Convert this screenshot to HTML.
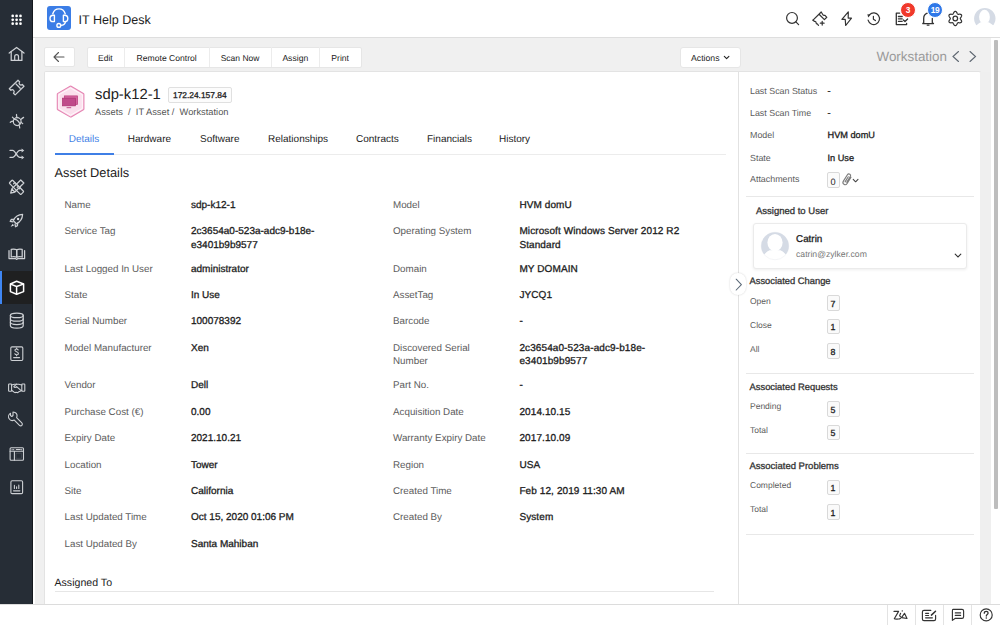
<!DOCTYPE html>
<html><head><meta charset="utf-8"><title>IT Help Desk</title>
<style>
html,body{margin:0;padding:0;width:1000px;height:625px;overflow:hidden;background:#f0f0f0}
body{position:relative;font-family:"Liberation Sans", sans-serif}
.t{position:absolute;white-space:nowrap;line-height:1;font-family:"Liberation Sans", sans-serif;text-rendering:geometricPrecision}
svg{overflow:visible}
</style></head><body>
<div style="position:absolute;left:0;top:0;width:1000px;height:625px;background:#f0f0f0"></div><div style="position:absolute;left:0px;top:0px;width:33px;height:605px;background:#262d36"></div><div style="position:absolute;left:32px;top:0px;width:1px;height:605px;background:#14181d"></div><div style="position:absolute;left:0px;top:271px;width:32px;height:33px;background:#1f2021"></div><div style="position:absolute;left:0px;top:271px;width:2px;height:33px;background:#3f86f2"></div><svg style="position:absolute;left:0;top:0" width="33" height="605" viewBox="0 0 33 605"><circle cx="12.7" cy="15.9" r="1.35" fill="#fff"/><circle cx="12.7" cy="19.8" r="1.35" fill="#fff"/><circle cx="12.7" cy="23.7" r="1.35" fill="#fff"/><circle cx="16.599999999999998" cy="15.9" r="1.35" fill="#fff"/><circle cx="16.599999999999998" cy="19.8" r="1.35" fill="#fff"/><circle cx="16.599999999999998" cy="23.7" r="1.35" fill="#fff"/><circle cx="20.5" cy="15.9" r="1.35" fill="#fff"/><circle cx="20.5" cy="19.8" r="1.35" fill="#fff"/><circle cx="20.5" cy="23.7" r="1.35" fill="#fff"/><g transform="translate(4,42)" fill="none" stroke="#cdd0d4" stroke-width="1.25" stroke-linecap="round" stroke-linejoin="round"><path d="M5.2 11 L12.6 5.4 L20 11"/><path d="M7.2 9.6 V18.4 H17.9 V9.6"/><path d="M10.7 18.4 V14.4 A1.9 1.9 0 0 1 14.5 14.4 V18.4"/></g><g transform="translate(4,75)" fill="none" stroke="#cdd0d4" stroke-width="1.25" stroke-linecap="round" stroke-linejoin="round"><path d="M14 5.2 L15.7 6.9 A1.5 1.5 0 0 0 18.3 9.5 L20 11.2 L11.2 19.9 L9.5 18.2 A1.5 1.5 0 0 0 6.9 15.3 L5.3 13.7 Z"/><path d="M12 9 L16.2 13.3"/></g><g transform="translate(0,0)" fill="none" stroke="#cdd0d4" stroke-width="1.25" stroke-linecap="round" stroke-linejoin="round"><circle cx="17.2" cy="121.6" r="3.9"/><path d="M14.4 119.3 C16.4 119.4 18.6 121 19.7 123.4"/><path d="M16.5 114.5 C16.4 115.6 16.7 116.6 17 117.6 M12.4 117.2 C13.1 118 13.8 118.6 14.4 119 M10.3 122.3 C11.3 121.5 12.3 121.2 13.4 121.2 M19.7 127.9 C19.7 126.9 19.4 126 19 125.3 M23.6 117.4 C22.6 118 21.8 118.6 21 119.4 M22.7 123.6 C22.1 123 21.6 122.7 21 122.5"/></g><g transform="translate(4,142)" fill="none" stroke="#cdd0d4" stroke-width="1.25" stroke-linecap="round" stroke-linejoin="round"><path d="M6 8.4 H8.6 C11.6 8.4 12.8 15.4 15.8 15.4 H18.2"/><path d="M6 15.4 H8.6 C11.6 15.4 12.8 8.4 15.8 8.4 H18.2"/></g><g transform="translate(4,142)" fill="#c5c9ce"><path d="M17.6 6.4 L20.3 8.4 L17.6 10.4 Z M17.6 13.4 L20.3 15.4 L17.6 17.4 Z"/></g><g transform="translate(4,175)" fill="none" stroke="#cdd0d4" stroke-width="1.25" stroke-linecap="round" stroke-linejoin="round"><g transform="rotate(45 12.5 12.3)"><rect x="4.3" y="10.1" width="16.4" height="4.4" rx="0.8"/><path d="M8 10.1 V11.8 M10.5 10.1 V11.3 M13 10.1 V11.8 M15.5 10.1 V11.3"/></g><g transform="rotate(-45 12.5 12.3)"><path d="M20.7 10.1 V14.5 H8 L4.3 12.3 L8 10.1 Z M8 10.1 V14.5"/></g></g><g transform="translate(4,208)" fill="none" stroke="#cdd0d4" stroke-width="1.25" stroke-linecap="round" stroke-linejoin="round"><path d="M18.6 6.4 C14 6.6 11 9 9.2 12.5 L12.4 15.8 C16 14 18.4 11 18.6 6.4 Z"/><path d="M9.9 11.3 L7.4 11.4 L6.2 13.4 L9 13.9 M13.6 15.1 L13.5 17.6 L11.5 18.8 L11 16"/></g><g transform="translate(4,208)" fill="#dfe2e6"><circle cx="14.1" cy="11" r="1.2"/><path d="M8.8 15.8 L6.6 18.8 L10 17.5 Z"/></g><g transform="translate(4,241)" fill="none" stroke="#cdd0d4" stroke-width="1.25" stroke-linecap="round" stroke-linejoin="round"><path d="M5 9.6 V17.6 H11.6 L12.7 18.4 L13.8 17.6 H20.6 V9.6"/><path d="M7.2 8.4 C9 8 11 8 12.7 8.8 V16.2 C11 15.6 9 15.6 7.2 16 Z"/><path d="M18.2 8.4 C16.4 8 14.4 8 12.7 8.8 V16.2 C14.4 15.6 16.4 15.6 18.2 16 Z"/></g><g transform="translate(4,275)" fill="none" stroke="#ffffff" stroke-width="1.5" stroke-linecap="round" stroke-linejoin="round"><path d="M12.6 6.3 L19.6 9 V16.6 L12.6 19.2 L6.4 16.6 V9 Z"/><path d="M6.6 9.1 L12.6 11.5 L19.4 9.1 M12.6 11.5 V19"/></g><g transform="translate(4,308)" fill="none" stroke="#cdd0d4" stroke-width="1.25" stroke-linecap="round" stroke-linejoin="round"><path d="M6.4 7.4 A6.4 2.2 0 0 1 19.2 7.4 V17.8 A6.4 2.4 0 0 1 6.4 17.8 Z"/><path d="M6.4 7.4 A6.4 2.2 0 0 0 19.2 7.4 M6.4 10.9 A6.4 2.2 0 0 0 19.2 10.9 M6.4 14.3 A6.4 2.2 0 0 0 19.2 14.3"/></g><g transform="translate(4,341)" fill="none" stroke="#cdd0d4" stroke-width="1.1" stroke-linecap="round" stroke-linejoin="round"><rect x="6.8" y="5.9" width="12" height="13.6" rx="1.2"/><path d="M9.7 16.6 H15.5"/><path d="M14.2 9 C13.9 8.4 13.3 8 12.5 8 C11.5 8 10.9 8.6 10.9 9.3 C10.9 11 14.4 10.5 14.4 12.4 C14.4 13.2 13.6 13.8 12.6 13.8 C11.7 13.8 11 13.4 10.8 12.7 M12.6 7 V8 M12.6 13.8 V14.7"/></g><g transform="translate(4,375)" fill="none" stroke="#cdd0d4" stroke-width="1.1" stroke-linecap="round" stroke-linejoin="round"><rect x="4.6" y="9" width="3" height="7.3" rx="0.6"/><rect x="17.8" y="9" width="3" height="7.3" rx="0.6"/><path d="M7.6 10 L10.4 9.2 H12.6 L14.8 9.2 L17.8 10"/><path d="M12.6 9.2 L9.8 11.6 C10.4 12.6 11.6 12.6 12.6 11.6 L16.6 15.2"/><path d="M7.6 15.2 L10.4 17.4 C11 17.8 11.6 17.6 12 17.2 L13 17.6 C13.6 17.8 14.2 17.4 14.4 17 L17.8 15.6"/></g><g transform="translate(4,408)" fill="none" stroke="#cdd0d4" stroke-width="1.1" stroke-linecap="round" stroke-linejoin="round"><path d="M6.5 5.2 C4.6 6.3 4 8.7 5 10.5 C6.1 12.4 8.4 13 10.3 12.1 L15.5 17.3 C16.2 18 17.3 18 17.9 17.3 C18.5 16.6 18.5 15.6 17.8 14.9 L12.6 9.7 C13.4 7.9 12.9 5.7 11 4.6 C10.3 4.2 9.6 4 9 4 V7.5 L7.8 8.5 L6.5 7.6 Z"/></g><g transform="translate(4,441)" fill="none" stroke="#cdd0d4" stroke-width="1.1" stroke-linecap="round" stroke-linejoin="round"><rect x="6.1" y="6.7" width="13.4" height="12.6" rx="1"/><path d="M6.1 10.3 H19.5 M10.4 10.3 V19.3"/><path d="M12.3 8.5 H16.3"/><path d="M12.4 12.3 H17.4 V17.3 H12.4 Z" stroke-width="0.5" opacity="0.3"/></g><g transform="translate(4,441)" fill="#c5c9ce"><rect x="7.6" y="7.9" width="1" height="1.4"/><rect x="9.2" y="7.9" width="1" height="1.4"/><rect x="17.2" y="7.9" width="1" height="1.4"/></g><g transform="translate(4,475)" fill="none" stroke="#cdd0d4" stroke-width="1.1" stroke-linecap="round" stroke-linejoin="round"><rect x="6.9" y="5.7" width="11.7" height="12.9" rx="1.2"/><path d="M9.6 15.8 H15.8" stroke-width="1.3"/><path d="M10.4 13.5 V10.4 M12.6 13.5 V11.8 M14.8 13.5 V10"/></g></svg><div style="position:absolute;left:33px;top:38px;width:1.6px;height:567px;background:#fff"></div><div style="position:absolute;left:33px;top:0px;width:967px;height:37px;background:#fff"></div><div style="position:absolute;left:33px;top:37px;width:967px;height:1px;background:#dedede"></div><div style="position:absolute;left:47.4px;top:6.2px;width:24px;height:24px;background:#3b7de6;border-radius:3px"></div><svg style="position:absolute;left:47.4px;top:6.2px;" width="24" height="24" viewBox="0 0 24 24"><g fill="none" stroke="#fff" stroke-width="1.4" stroke-linecap="round" stroke-linejoin="round"><path d="M5.8 7.8 C6.8 4.6 9.2 2.9 12 2.9 C14.8 2.9 17.2 4.6 18.2 7.8"/><path d="M7.4 9.2 H6.2 C4.2 9.2 3 10.7 3 12.4 C3 14.1 4.2 15.6 6.2 15.6 H7.4 Z"/><path d="M16.4 9.2 H17.6 C19.6 9.2 20.8 10.7 20.8 12.4 C20.8 14.1 19.6 15.6 17.6 15.6 H16.4 Z"/><path d="M18.4 15.8 C18 18 16 19.3 13.8 19.4"/><circle cx="11.8" cy="19.4" r="1.9"/></g></svg><div class="t" style="left:78.5px;top:14.00px;font-size:12.55px;color:#1e1e1e;">IT Help Desk</div><svg style="position:absolute;left:782px;top:6px;" width="26" height="26" viewBox="0 0 26 26"><g fill="none" stroke="#333" stroke-width="1.2" stroke-linecap="round" stroke-linejoin="round"><circle cx="10" cy="11.9" r="5.4"/><path d="M13.9 15.8 L16.6 18.6"/></g></svg><svg style="position:absolute;left:808px;top:6px;" width="26" height="26" viewBox="0 0 26 26"><g fill="none" stroke="#333" stroke-width="1.2" stroke-linecap="round" stroke-linejoin="round"><path d="M5 14.2 L13.2 6 L14.6 8.2 C15.1 9.2 16.1 9.5 17 9.3 L18.8 11.3 L16.4 13.6 L11.3 8.5"/><path d="M5 14.2 L6.6 15.5 C7.4 15.3 8.2 15.8 8.1 16.6 C8 17.4 8.6 17.9 9.3 17.9 L10.5 19.4"/><path d="M14.2 15.3 V19.1 M12.3 17.2 H16.1"/></g></svg><svg style="position:absolute;left:835px;top:6px;" width="26" height="26" viewBox="0 0 26 26"><g fill="none" stroke="#333" stroke-width="1.2" stroke-linecap="round" stroke-linejoin="round"><path d="M13.3 5.9 L6.9 13.3 H10.2 L10.7 19.5 L16.5 12.1 H13.2 Z"/></g></svg><svg style="position:absolute;left:862px;top:6px;" width="26" height="26" viewBox="0 0 26 26"><g fill="none" stroke="#333" stroke-width="1.2" stroke-linecap="round" stroke-linejoin="round"><path d="M6.1 14.2 A5.8 5.8 0 1 0 7.6 8.6"/><path d="M11.4 10.3 V13.2 L13.4 14.6"/></g></svg><svg style="position:absolute;left:862px;top:6px;" width="26" height="26" viewBox="0 0 26 26"><path d="M5.4 8.2 L8.8 8.6 L6.2 11.4 Z" fill="#333"/></svg><svg style="position:absolute;left:890px;top:2px;" width="26" height="26" viewBox="0 0 26 26"><g fill="none" stroke="#333" stroke-width="1.3" stroke-linecap="round" stroke-linejoin="round"><path d="M9.6 11.2 H6.3 V22.6 H16.6 V21.4"/><path d="M8.4 14.5 H12.2 M8.4 16.8 H12.2 M8.4 19.3 H12.2"/><path d="M13.3 18 L15 19.5 L17.6 17"/></g></svg><svg style="position:absolute;left:918px;top:2px;" width="26" height="26" viewBox="0 0 26 26"><g fill="none" stroke="#333" stroke-width="1.3" stroke-linecap="round" stroke-linejoin="round"><path d="M9.2 11.2 C7 12 5.7 13.8 5.7 16.5 V20.8 L4.8 21.6 H15.5 L14.3 20.8 V16.5"/><path d="M9.2 23.1 H11"/></g></svg><svg style="position:absolute;left:943px;top:6px;" width="26" height="26" viewBox="0 0 26 26"><g fill="none" stroke="#333" stroke-width="1.25" stroke-linecap="round" stroke-linejoin="round"><path d="M17.30 12.50 L17.31 12.63 L17.34 12.76 L17.40 12.90 L17.47 13.04 L17.56 13.19 L17.67 13.35 L17.78 13.52 L17.90 13.69 L18.02 13.87 L18.14 14.07 L18.26 14.26 L18.36 14.47 L18.45 14.68 L18.52 14.89 L18.58 15.10 L18.60 15.31 L18.61 15.51 L18.58 15.70 L18.53 15.88 L18.45 16.05 L18.34 16.20 L18.21 16.34 L18.06 16.46 L17.88 16.56 L17.69 16.63 L17.48 16.70 L17.26 16.74 L17.04 16.77 L16.81 16.78 L16.58 16.78 L16.35 16.77 L16.13 16.75 L15.92 16.74 L15.72 16.72 L15.53 16.71 L15.36 16.71 L15.20 16.71 L15.05 16.74 L14.92 16.77 L14.80 16.83 L14.69 16.91 L14.59 17.00 L14.50 17.12 L14.42 17.25 L14.33 17.40 L14.25 17.57 L14.16 17.75 L14.07 17.95 L13.97 18.14 L13.87 18.34 L13.75 18.54 L13.63 18.74 L13.49 18.92 L13.34 19.09 L13.19 19.23 L13.02 19.36 L12.85 19.46 L12.67 19.54 L12.49 19.58 L12.30 19.60 L12.11 19.58 L11.93 19.54 L11.75 19.46 L11.58 19.36 L11.41 19.23 L11.26 19.09 L11.11 18.92 L10.97 18.74 L10.85 18.54 L10.73 18.34 L10.63 18.14 L10.53 17.95 L10.44 17.75 L10.35 17.57 L10.27 17.40 L10.18 17.25 L10.10 17.12 L10.01 17.00 L9.91 16.91 L9.80 16.83 L9.68 16.77 L9.55 16.74 L9.40 16.71 L9.24 16.71 L9.07 16.71 L8.88 16.72 L8.68 16.74 L8.47 16.75 L8.25 16.77 L8.02 16.78 L7.79 16.78 L7.56 16.77 L7.34 16.74 L7.12 16.70 L6.91 16.63 L6.72 16.56 L6.54 16.46 L6.39 16.34 L6.26 16.20 L6.15 16.05 L6.07 15.88 L6.02 15.70 L5.99 15.51 L6.00 15.31 L6.02 15.10 L6.08 14.89 L6.15 14.68 L6.24 14.47 L6.34 14.26 L6.46 14.07 L6.58 13.87 L6.70 13.69 L6.82 13.52 L6.93 13.35 L7.04 13.19 L7.13 13.04 L7.20 12.90 L7.26 12.76 L7.29 12.63 L7.30 12.50 L7.29 12.37 L7.26 12.24 L7.20 12.10 L7.13 11.96 L7.04 11.81 L6.93 11.65 L6.82 11.48 L6.70 11.31 L6.58 11.13 L6.46 10.93 L6.34 10.74 L6.24 10.53 L6.15 10.32 L6.08 10.11 L6.02 9.90 L6.00 9.69 L5.99 9.49 L6.02 9.30 L6.07 9.12 L6.15 8.95 L6.26 8.80 L6.39 8.66 L6.54 8.54 L6.72 8.44 L6.91 8.37 L7.12 8.30 L7.34 8.26 L7.56 8.23 L7.79 8.22 L8.02 8.22 L8.25 8.23 L8.47 8.25 L8.68 8.26 L8.88 8.28 L9.07 8.29 L9.24 8.29 L9.40 8.29 L9.55 8.26 L9.68 8.23 L9.80 8.17 L9.91 8.09 L10.01 8.00 L10.10 7.88 L10.18 7.75 L10.27 7.60 L10.35 7.43 L10.44 7.25 L10.53 7.05 L10.63 6.86 L10.73 6.66 L10.85 6.46 L10.97 6.26 L11.11 6.08 L11.26 5.91 L11.41 5.77 L11.58 5.64 L11.75 5.54 L11.93 5.46 L12.11 5.42 L12.30 5.40 L12.49 5.42 L12.67 5.46 L12.85 5.54 L13.02 5.64 L13.19 5.77 L13.34 5.91 L13.49 6.08 L13.63 6.26 L13.75 6.46 L13.87 6.66 L13.97 6.86 L14.07 7.05 L14.16 7.25 L14.25 7.43 L14.33 7.60 L14.42 7.75 L14.50 7.88 L14.59 8.00 L14.69 8.09 L14.80 8.17 L14.92 8.23 L15.05 8.26 L15.20 8.29 L15.36 8.29 L15.53 8.29 L15.72 8.28 L15.92 8.26 L16.13 8.25 L16.35 8.23 L16.58 8.22 L16.81 8.22 L17.04 8.23 L17.26 8.26 L17.48 8.30 L17.69 8.37 L17.88 8.44 L18.06 8.54 L18.21 8.66 L18.34 8.80 L18.45 8.95 L18.53 9.12 L18.58 9.30 L18.61 9.49 L18.60 9.69 L18.58 9.90 L18.52 10.11 L18.45 10.32 L18.36 10.53 L18.26 10.74 L18.14 10.93 L18.02 11.13 L17.90 11.31 L17.78 11.48 L17.67 11.65 L17.56 11.81 L17.47 11.96 L17.40 12.10 L17.34 12.24 L17.31 12.37 L17.30 12.50Z"/><circle cx="12.3" cy="12.5" r="2.3"/></g></svg><svg style="position:absolute;left:970px;top:4px;" width="30" height="30" viewBox="0 0 30 30"><circle cx="14.8" cy="14.6" r="10.7" fill="#d5dbe5"/><ellipse cx="14.5" cy="12.9" rx="5.4" ry="7.1" fill="#fff"/><path d="M2 23.5 L6.5 21.3 C8 19.9 9.4 18.9 10.6 18.3 H18.6 C19.8 18.9 21.4 19.9 23 21.3 L27.5 23.5 V30 H2 Z" fill="#fff"/></svg><div style="position:absolute;left:901.2px;top:3.3px;width:14px;height:14px;border-radius:50%;background:#f0392b;border:1px solid #fff;box-sizing:content-box;margin:-1px 0 0 -1px;color:#fff;font:bold 8.4px/14px 'Liberation Sans';text-align:center">3</div><div style="position:absolute;left:928.1px;top:3.1px;width:14px;height:14px;border-radius:50%;background:#2f78e8;border:1px solid #fff;box-sizing:content-box;margin:-1px 0 0 -1px;color:#fff;font:bold 8.4px/14px 'Liberation Sans';text-align:center;letter-spacing:-0.3px">19</div><div style="position:absolute;left:44px;top:47px;width:31px;height:20px;background:#fff;border:1px solid #e6e6e6;box-sizing:border-box;border-radius:2px"></div><svg style="position:absolute;left:51px;top:49px;" width="16" height="16" viewBox="0 0 16 16"><g fill="none" stroke="#555" stroke-width="1.1" stroke-linecap="round" stroke-linejoin="round"><path d="M13 8 H3 M7.5 3.5 L3 8 L7.5 12.5"/></g></svg><div style="position:absolute;left:86.5px;top:46.5px;width:275px;height:21px;background:#fff;border:1px solid #e6e6e6;box-sizing:border-box;border-radius:2px"></div><div style="position:absolute;left:124px;top:47px;width:1px;height:20px;background:#ececec"></div><div style="position:absolute;left:209px;top:47px;width:1px;height:20px;background:#ececec"></div><div style="position:absolute;left:271px;top:47px;width:1px;height:20px;background:#ececec"></div><div style="position:absolute;left:319px;top:47px;width:1px;height:20px;background:#ececec"></div><div class="t" style="left:98px;top:54.00px;font-size:8.5px;color:#222;">Edit</div><div class="t" style="left:136.6px;top:54.00px;font-size:8.6px;color:#222;">Remote Control</div><div class="t" style="left:220.7px;top:54.00px;font-size:8.5px;color:#222;">Scan Now</div><div class="t" style="left:282.4px;top:54.00px;font-size:8.6px;color:#222;">Assign</div><div class="t" style="left:331.3px;top:54.00px;font-size:8.6px;color:#222;">Print</div><div style="position:absolute;left:679.5px;top:46.5px;width:61px;height:21px;background:#fff;border:1px solid #e6e6e6;box-sizing:border-box;border-radius:3px"></div><div class="t" style="left:691px;top:54.00px;font-size:8.7px;color:#222;">Actions</div><svg style="position:absolute;left:722.5px;top:54.5px;" width="8" height="6" viewBox="0 0 8 6"><path d="M1.3 1.3 L3.6 3.6 L5.9 1.3" fill="none" stroke="#222" stroke-width="1.1" stroke-linecap="round" stroke-linejoin="round"/></svg><div class="t" style="left:876.5px;top:50.00px;font-size:13.4px;color:#9a9a9a;">Workstation</div><svg style="position:absolute;left:950px;top:50px;" width="12" height="13" viewBox="0 0 12 13"><path d="M8.5 1.5 L3 6.5 L8.5 11.5" fill="none" stroke="#5d6670" stroke-width="1.1" stroke-linecap="round"/></svg><svg style="position:absolute;left:967px;top:50px;" width="12" height="13" viewBox="0 0 12 13"><path d="M3 1.5 L8.5 6.5 L3 11.5" fill="none" stroke="#5d6670" stroke-width="1.1" stroke-linecap="round"/></svg><div style="position:absolute;left:991px;top:38px;width:9px;height:567px;background:#fff"></div><div style="position:absolute;left:994px;top:40px;width:4px;height:469px;background:#bdbdbd;border-radius:1px"></div><div style="position:absolute;left:44px;top:71px;width:937px;height:534px;background:#fff;border:1px solid #e3e3e3;border-bottom:none;box-sizing:border-box;border-radius:2px 2px 0 0"></div><div style="position:absolute;left:980px;top:72px;width:11px;height:533px;background:#efefef"></div><div style="position:absolute;left:738px;top:72px;width:1px;height:533px;background:#e2e2e2"></div><svg style="position:absolute;left:53.8px;top:85px;" width="32" height="34" viewBox="0 0 32 34"><path d="M16.1 1.3 Q16.6 1 17.1 1.3 L29.4 8.4 Q29.9 8.7 29.9 9.3 V23.9 Q29.9 24.5 29.4 24.8 L17.1 31.9 Q16.6 32.2 16.1 31.9 L3.8 24.8 Q3.3 24.5 3.3 23.9 V9.3 Q3.3 8.7 3.8 8.4 Z" fill="#fbe0ed" stroke="#e585b3" stroke-width="1.1"/><path d="M16.6 3 L28.3 9.7 V23.5 L16.6 30.2 L4.9 23.5 V9.7 Z" fill="none" stroke="#fff" stroke-width="0.9" opacity="0.85"/><rect x="10.3" y="10.9" width="13.3" height="8.5" fill="#d566a0" stroke="#b8397a" stroke-width="0.7"/><rect x="8.3" y="13.1" width="13.3" height="7.8" fill="#c04a8a" stroke="#a8306d" stroke-width="0.6"/><path d="M12.6 22.7 H17.2" stroke="#b8397a" stroke-width="0.9"/></svg><div class="t" style="left:95px;top:88.00px;font-size:14.8px;color:#222;">sdp-k12-1</div><div style="position:absolute;left:168px;top:87px;width:64px;height:16px;background:#fcfcfc;border:1px solid #e0e0e0;box-sizing:border-box;border-radius:2px"></div><div class="t" style="left:173px;top:91.00px;font-size:8.4px;color:#222;-webkit-text-stroke:0.3px #222;">172.24.157.84</div><div class="t" style="left:95px;top:108.00px;font-size:9.3px;color:#555;">Assets&nbsp; /&nbsp; IT Asset /&nbsp; Workstation</div><div style="position:absolute;left:55px;top:154px;width:671px;height:1px;background:#ececec"></div><div style="position:absolute;left:55px;top:153px;width:59px;height:2px;background:#3f7fe6"></div><div class="t" style="left:68.7px;top:135.00px;font-size:10px;color:#3f7fe6;">Details</div><div class="t" style="left:127.7px;top:135.00px;font-size:10px;color:#222;">Hardware</div><div class="t" style="left:200px;top:135.00px;font-size:10px;color:#222;">Software</div><div class="t" style="left:268px;top:135.00px;font-size:10px;color:#222;">Relationships</div><div class="t" style="left:356px;top:135.00px;font-size:10px;color:#222;">Contracts</div><div class="t" style="left:427px;top:135.00px;font-size:10px;color:#222;">Financials</div><div class="t" style="left:499px;top:135.00px;font-size:10px;color:#222;">History</div><div class="t" style="left:54.5px;top:167.00px;font-size:12.8px;color:#222;">Asset Details</div><div class="t" style="left:64.5px;top:201.00px;font-size:9.8px;color:#5c5c5c;">Name</div><div class="t" style="left:191px;top:201.00px;font-size:10px;color:#1c1c1c;-webkit-text-stroke:0.3px #1c1c1c;">sdp-k12-1</div><div class="t" style="left:64.5px;top:227.00px;font-size:9.8px;color:#5c5c5c;">Service Tag</div><div class="t" style="left:191px;top:227.00px;font-size:10px;color:#1c1c1c;-webkit-text-stroke:0.3px #1c1c1c;">2c3654a0-523a-adc9-b18e-</div><div class="t" style="left:191px;top:241.00px;font-size:10px;color:#1c1c1c;-webkit-text-stroke:0.3px #1c1c1c;">e3401b9b9577</div><div class="t" style="left:64.5px;top:265.00px;font-size:9.8px;color:#5c5c5c;">Last Logged In User</div><div class="t" style="left:191px;top:265.00px;font-size:10px;color:#1c1c1c;-webkit-text-stroke:0.3px #1c1c1c;">administrator</div><div class="t" style="left:64.5px;top:291.00px;font-size:9.8px;color:#5c5c5c;">State</div><div class="t" style="left:191px;top:291.00px;font-size:10px;color:#1c1c1c;-webkit-text-stroke:0.3px #1c1c1c;">In Use</div><div class="t" style="left:64.5px;top:317.00px;font-size:9.8px;color:#5c5c5c;">Serial Number</div><div class="t" style="left:191px;top:317.00px;font-size:10px;color:#1c1c1c;-webkit-text-stroke:0.3px #1c1c1c;">100078392</div><div class="t" style="left:64.5px;top:344.00px;font-size:9.8px;color:#5c5c5c;">Model Manufacturer</div><div class="t" style="left:191px;top:344.00px;font-size:10px;color:#1c1c1c;-webkit-text-stroke:0.3px #1c1c1c;">Xen</div><div class="t" style="left:64.5px;top:381.00px;font-size:9.8px;color:#5c5c5c;">Vendor</div><div class="t" style="left:191px;top:381.00px;font-size:10px;color:#1c1c1c;-webkit-text-stroke:0.3px #1c1c1c;">Dell</div><div class="t" style="left:64.5px;top:408.00px;font-size:9.8px;color:#5c5c5c;">Purchase Cost (&euro;)</div><div class="t" style="left:191px;top:408.00px;font-size:10px;color:#1c1c1c;-webkit-text-stroke:0.3px #1c1c1c;">0.00</div><div class="t" style="left:64.5px;top:434.00px;font-size:9.8px;color:#5c5c5c;">Expiry Date</div><div class="t" style="left:191px;top:434.00px;font-size:10px;color:#1c1c1c;-webkit-text-stroke:0.3px #1c1c1c;">2021.10.21</div><div class="t" style="left:64.5px;top:461.00px;font-size:9.8px;color:#5c5c5c;">Location</div><div class="t" style="left:191px;top:461.00px;font-size:10px;color:#1c1c1c;-webkit-text-stroke:0.3px #1c1c1c;">Tower</div><div class="t" style="left:64.5px;top:487.00px;font-size:9.8px;color:#5c5c5c;">Site</div><div class="t" style="left:191px;top:487.00px;font-size:10px;color:#1c1c1c;-webkit-text-stroke:0.3px #1c1c1c;">California</div><div class="t" style="left:64.5px;top:513.00px;font-size:9.8px;color:#5c5c5c;">Last Updated Time</div><div class="t" style="left:191px;top:513.00px;font-size:10px;color:#1c1c1c;-webkit-text-stroke:0.3px #1c1c1c;">Oct 15, 2020 01:06 PM</div><div class="t" style="left:64.5px;top:540.00px;font-size:9.8px;color:#5c5c5c;">Last Updated By</div><div class="t" style="left:191px;top:540.00px;font-size:10px;color:#1c1c1c;-webkit-text-stroke:0.3px #1c1c1c;">Santa Mahiban</div><div class="t" style="left:393px;top:201.00px;font-size:9.8px;color:#5c5c5c;">Model</div><div class="t" style="left:519.4px;top:201.00px;font-size:10px;color:#1c1c1c;-webkit-text-stroke:0.3px #1c1c1c;letter-spacing:0.1px;">HVM domU</div><div class="t" style="left:393px;top:227.00px;font-size:9.8px;color:#5c5c5c;">Operating System</div><div class="t" style="left:519.4px;top:227.00px;font-size:10px;color:#1c1c1c;-webkit-text-stroke:0.3px #1c1c1c;letter-spacing:0.1px;">Microsoft Windows Server 2012 R2</div><div class="t" style="left:519.4px;top:241.00px;font-size:10px;color:#1c1c1c;-webkit-text-stroke:0.3px #1c1c1c;letter-spacing:0.1px;">Standard</div><div class="t" style="left:393px;top:265.00px;font-size:9.8px;color:#5c5c5c;">Domain</div><div class="t" style="left:519.4px;top:265.00px;font-size:10px;color:#1c1c1c;-webkit-text-stroke:0.3px #1c1c1c;letter-spacing:0.1px;">MY DOMAIN</div><div class="t" style="left:393px;top:291.00px;font-size:9.8px;color:#5c5c5c;">AssetTag</div><div class="t" style="left:519.4px;top:291.00px;font-size:10px;color:#1c1c1c;-webkit-text-stroke:0.3px #1c1c1c;letter-spacing:0.1px;">JYCQ1</div><div class="t" style="left:393px;top:317.00px;font-size:9.8px;color:#5c5c5c;">Barcode</div><div class="t" style="left:519.4px;top:317.00px;font-size:10px;color:#1c1c1c;-webkit-text-stroke:0.3px #1c1c1c;letter-spacing:0.1px;">-</div><div class="t" style="left:393px;top:344.00px;font-size:9.8px;color:#5c5c5c;">Discovered Serial</div><div class="t" style="left:393px;top:357.00px;font-size:9.8px;color:#5c5c5c;">Number</div><div class="t" style="left:519.4px;top:344.00px;font-size:10px;color:#1c1c1c;-webkit-text-stroke:0.3px #1c1c1c;letter-spacing:0.1px;">2c3654a0-523a-adc9-b18e-</div><div class="t" style="left:519.4px;top:357.00px;font-size:10px;color:#1c1c1c;-webkit-text-stroke:0.3px #1c1c1c;letter-spacing:0.1px;">e3401b9b9577</div><div class="t" style="left:393px;top:381.00px;font-size:9.8px;color:#5c5c5c;">Part No.</div><div class="t" style="left:519.4px;top:381.00px;font-size:10px;color:#1c1c1c;-webkit-text-stroke:0.3px #1c1c1c;letter-spacing:0.1px;">-</div><div class="t" style="left:393px;top:408.00px;font-size:9.8px;color:#5c5c5c;">Acquisition Date</div><div class="t" style="left:519.4px;top:408.00px;font-size:10px;color:#1c1c1c;-webkit-text-stroke:0.3px #1c1c1c;letter-spacing:0.1px;">2014.10.15</div><div class="t" style="left:393px;top:434.00px;font-size:9.8px;color:#5c5c5c;">Warranty Expiry Date</div><div class="t" style="left:519.4px;top:434.00px;font-size:10px;color:#1c1c1c;-webkit-text-stroke:0.3px #1c1c1c;letter-spacing:0.1px;">2017.10.09</div><div class="t" style="left:393px;top:461.00px;font-size:9.8px;color:#5c5c5c;">Region</div><div class="t" style="left:519.4px;top:461.00px;font-size:10px;color:#1c1c1c;-webkit-text-stroke:0.3px #1c1c1c;letter-spacing:0.1px;">USA</div><div class="t" style="left:393px;top:487.00px;font-size:9.8px;color:#5c5c5c;">Created Time</div><div class="t" style="left:519.4px;top:487.00px;font-size:10px;color:#1c1c1c;-webkit-text-stroke:0.3px #1c1c1c;letter-spacing:0.1px;">Feb 12, 2019 11:30 AM</div><div class="t" style="left:393px;top:513.00px;font-size:9.8px;color:#5c5c5c;">Created By</div><div class="t" style="left:519.4px;top:513.00px;font-size:10px;color:#1c1c1c;-webkit-text-stroke:0.3px #1c1c1c;letter-spacing:0.1px;">System</div><div class="t" style="left:54.5px;top:578.00px;font-size:10.6px;color:#222;">Assigned To</div><div style="position:absolute;left:55px;top:591px;width:659px;height:1px;background:#e6e6e6"></div><div style="position:absolute;left:729.5px;top:272.5px;width:16px;height:22px;background:#fff;border-radius:8px;box-shadow:0 0 2px rgba(0,0,0,0.18)"></div><svg style="position:absolute;left:734px;top:278px;" width="10" height="13" viewBox="0 0 10 13"><path d="M2.2 1.2 L7.4 6.6 L2.2 12" fill="none" stroke="#5a6877" stroke-width="1.05" stroke-linecap="round" stroke-linejoin="round"/></svg><div class="t" style="left:750px;top:87.00px;font-size:8.9px;color:#5c5c5c;">Last Scan Status</div><div class="t" style="left:827.5px;top:87.00px;font-size:9.2px;color:#1c1c1c;-webkit-text-stroke:0.3px #1c1c1c;">-</div><div class="t" style="left:750px;top:109.00px;font-size:8.9px;color:#5c5c5c;">Last Scan Time</div><div class="t" style="left:827.5px;top:109.00px;font-size:9.2px;color:#1c1c1c;-webkit-text-stroke:0.3px #1c1c1c;">-</div><div class="t" style="left:750px;top:131.00px;font-size:8.9px;color:#5c5c5c;">Model</div><div class="t" style="left:827.5px;top:131.00px;font-size:9.2px;color:#1c1c1c;-webkit-text-stroke:0.3px #1c1c1c;">HVM domU</div><div class="t" style="left:750px;top:154.00px;font-size:8.9px;color:#5c5c5c;">State</div><div class="t" style="left:827.5px;top:154.00px;font-size:9.2px;color:#1c1c1c;-webkit-text-stroke:0.3px #1c1c1c;">In Use</div><div class="t" style="left:750px;top:175.00px;font-size:8.9px;color:#5c5c5c;">Attachments</div><div style="position:absolute;left:827px;top:172px;width:13px;height:16px;background:#fbfbfb;border:1px solid #d9d9d9;box-sizing:border-box;border-radius:2px"></div><div class="t" style="left:830.6px;top:178.00px;font-size:9.2px;color:#1c1c1c;">0</div><svg style="position:absolute;left:840px;top:170px;" width="14" height="18" viewBox="0 0 14 18"><g transform="rotate(32 7 9.5)" fill="none" stroke="#7d7d7d" stroke-width="1.15" stroke-linecap="round"><path d="M9.2 5.5 V12.8 C9.2 14.2 8.2 15.2 7 15.2 C5.8 15.2 4.8 14.2 4.8 12.8 V5.2 C4.8 4.2 5.6 3.5 6.6 3.5 C7.6 3.5 8.2 4.2 8.2 5.2 V12"/><path d="M6.6 6.5 V12.5"/></g></svg><svg style="position:absolute;left:852px;top:178px;" width="8" height="6" viewBox="0 0 8 6"><path d="M1.2 1.3 L3.6 3.8 L6 1.3" fill="none" stroke="#444" stroke-width="1.05" stroke-linecap="round" stroke-linejoin="round"/></svg><div style="position:absolute;left:746px;top:196px;width:228px;height:1px;background:#e8e8e8"></div><div class="t" style="left:756px;top:207.00px;font-size:9.5px;color:#333;-webkit-text-stroke:0.3px #333;">Assigned to User</div><div style="position:absolute;left:752.5px;top:223px;width:214.5px;height:46px;background:#fff;border:1px solid #ebebeb;box-sizing:border-box;border-radius:3px;box-shadow:0 1px 3px rgba(0,0,0,0.07)"></div><svg style="position:absolute;left:761px;top:232px;" width="28" height="28" viewBox="0 0 28 28"><circle cx="14" cy="14" r="13.8" fill="#fff" stroke="#eceef2" stroke-width="0.6"/><path d="M14 0.2 A13.8 13.8 0 0 1 27.8 14 C27.8 17 27 19.8 25 22.2 L23.8 21.8 C22.5 20.5 21 19.2 19.5 18.6 H8.5 C7 19.2 5.5 20.5 4.2 21.8 L3 22.2 C1 19.8 0.2 17 0.2 14 A13.8 13.8 0 0 1 14 0.2 Z" fill="#d5dbe5"/><ellipse cx="14" cy="10.6" rx="7.6" ry="8.7" fill="#fff"/><path d="M4 22 C5.5 20.5 7 19.2 8.5 18.6 H19.5 C21 19.2 22.5 20.5 24 22 Z" fill="#fff"/></svg><div class="t" style="left:796px;top:235.00px;font-size:9.9px;color:#222;-webkit-text-stroke:0.3px #222;">Catrin</div><div class="t" style="left:796px;top:250.00px;font-size:8.67px;color:#777;">catrin@zylker.com</div><svg style="position:absolute;left:954px;top:253px;" width="8" height="6" viewBox="0 0 8 6"><path d="M1.2 1.2 L4 4 L6.8 1.2" fill="none" stroke="#333" stroke-width="1.1" stroke-linecap="round"/></svg><div class="t" style="left:749.5px;top:277.00px;font-size:9.35px;color:#333;-webkit-text-stroke:0.3px #333;">Associated Change</div><div class="t" style="left:750px;top:297.00px;font-size:8.5px;color:#5c5c5c;">Open</div><div style="position:absolute;left:827px;top:295px;width:13px;height:15.5px;background:#fafafa;border:1px solid #d9d9d9;box-sizing:border-box;border-radius:2px"></div><div class="t" style="left:830.6px;top:300.00px;font-size:8.8px;color:#1c1c1c;-webkit-text-stroke:0.3px #1c1c1c;">7</div><div class="t" style="left:750px;top:321.00px;font-size:8.5px;color:#5c5c5c;">Close</div><div style="position:absolute;left:827px;top:318.75px;width:13px;height:15.5px;background:#fafafa;border:1px solid #d9d9d9;box-sizing:border-box;border-radius:2px"></div><div class="t" style="left:830.6px;top:323.00px;font-size:8.8px;color:#1c1c1c;-webkit-text-stroke:0.3px #1c1c1c;">1</div><div class="t" style="left:750px;top:345.00px;font-size:8.5px;color:#5c5c5c;">All</div><div style="position:absolute;left:827px;top:343.25px;width:13px;height:15.5px;background:#fafafa;border:1px solid #d9d9d9;box-sizing:border-box;border-radius:2px"></div><div class="t" style="left:830.6px;top:348.00px;font-size:8.8px;color:#1c1c1c;-webkit-text-stroke:0.3px #1c1c1c;">8</div><div style="position:absolute;left:746px;top:373px;width:228px;height:1px;background:#e8e8e8"></div><div class="t" style="left:749.5px;top:382.00px;font-size:9.4px;color:#333;-webkit-text-stroke:0.3px #333;">Associated Requests</div><div class="t" style="left:750px;top:402.00px;font-size:8.5px;color:#5c5c5c;">Pending</div><div style="position:absolute;left:827px;top:401px;width:13px;height:15.5px;background:#fafafa;border:1px solid #d9d9d9;box-sizing:border-box;border-radius:2px"></div><div class="t" style="left:830.6px;top:406.00px;font-size:8.8px;color:#1c1c1c;-webkit-text-stroke:0.3px #1c1c1c;">5</div><div class="t" style="left:750px;top:426.00px;font-size:8.5px;color:#5c5c5c;">Total</div><div style="position:absolute;left:827px;top:424.8px;width:13px;height:15.5px;background:#fafafa;border:1px solid #d9d9d9;box-sizing:border-box;border-radius:2px"></div><div class="t" style="left:830.6px;top:429.00px;font-size:8.8px;color:#1c1c1c;-webkit-text-stroke:0.3px #1c1c1c;">5</div><div style="position:absolute;left:746px;top:452.5px;width:228px;height:1px;background:#e8e8e8"></div><div class="t" style="left:749.5px;top:462.00px;font-size:9.5px;color:#333;-webkit-text-stroke:0.3px #333;">Associated Problems</div><div class="t" style="left:750px;top:481.00px;font-size:8.5px;color:#5c5c5c;">Completed</div><div style="position:absolute;left:827px;top:479.8px;width:13px;height:15.5px;background:#fafafa;border:1px solid #d9d9d9;box-sizing:border-box;border-radius:2px"></div><div class="t" style="left:830.6px;top:484.00px;font-size:8.8px;color:#1c1c1c;-webkit-text-stroke:0.3px #1c1c1c;">1</div><div class="t" style="left:750px;top:505.00px;font-size:8.5px;color:#5c5c5c;">Total</div><div style="position:absolute;left:827px;top:504.2px;width:13px;height:15.5px;background:#fafafa;border:1px solid #d9d9d9;box-sizing:border-box;border-radius:2px"></div><div class="t" style="left:830.6px;top:509.00px;font-size:8.8px;color:#1c1c1c;-webkit-text-stroke:0.3px #1c1c1c;">1</div><div style="position:absolute;left:746px;top:533.5px;width:228px;height:1px;background:#e8e8e8"></div><div style="position:absolute;left:0px;top:604px;width:1000px;height:21px;background:#fff"></div><div style="position:absolute;left:0px;top:604px;width:1000px;height:1px;background:#dcdcdc"></div><div style="position:absolute;left:887px;top:605px;width:1px;height:20px;background:#e3e3e3"></div><div style="position:absolute;left:915px;top:605px;width:1px;height:20px;background:#e3e3e3"></div><div style="position:absolute;left:943px;top:605px;width:1px;height:20px;background:#e3e3e3"></div><div style="position:absolute;left:971px;top:605px;width:1px;height:20px;background:#e3e3e3"></div><svg style="position:absolute;left:887px;top:604px;" width="28" height="21" viewBox="0 0 28 21"><g fill="none" stroke="#333" stroke-width="1.15" stroke-linecap="round" stroke-linejoin="round"><path d="M7 7.4 H11.6 L7.3 14.7 C7.6 15.3 8.5 15.2 12.4 15 L13.6 14.2"/><path d="M13.6 9.3 L12.6 11.9 L14.4 13.4"/><path d="M14.6 13.6 L17.5 9.3 L20 14.5 Z"/></g><circle cx="15.3" cy="6.9" r="0.7" fill="#333"/></svg><svg style="position:absolute;left:915px;top:604px;" width="28" height="21" viewBox="0 0 28 21"><g fill="none" stroke="#333" stroke-width="1.15" stroke-linecap="round" stroke-linejoin="round"><path d="M15.8 6.4 H9 Q7.4 6.4 7.4 8 V15 Q7.4 16.6 9 16.6 H19 Q20.6 16.6 20.6 15 V11.4"/><path d="M10.6 9.3 H13.6 M10.6 11.5 H13.6 M10.6 13.8 H17.4"/><path d="M16.4 11.1 L20.5 7.3" stroke-width="1.5"/></g></svg><svg style="position:absolute;left:943px;top:604px;" width="28" height="21" viewBox="0 0 28 21"><g fill="none" stroke="#333" stroke-width="1.15" stroke-linecap="round" stroke-linejoin="round"><path d="M10 5.4 H19 Q20.6 5.4 20.6 7 V12.7 Q20.6 14.3 19 14.3 H12.4 L9.4 16.4 V7 Q9.4 5.4 10 5.4 Z"/><path d="M12.3 8.9 H17.6 M12.3 11.4 H17.6"/></g></svg><svg style="position:absolute;left:971px;top:604px;" width="29" height="21" viewBox="0 0 29 21"><circle cx="15.2" cy="10.9" r="6" fill="none" stroke="#333" stroke-width="1.15"/><path d="M13.3 9.2 C13.3 8 14.1 7.3 15.2 7.3 C16.3 7.3 17.1 8 17.1 9 C17.1 10.4 15.3 10.4 15.3 12" fill="none" stroke="#333" stroke-width="1.3" stroke-linecap="round"/><circle cx="15.3" cy="14" r="0.8" fill="#333"/></svg>
</body></html>
